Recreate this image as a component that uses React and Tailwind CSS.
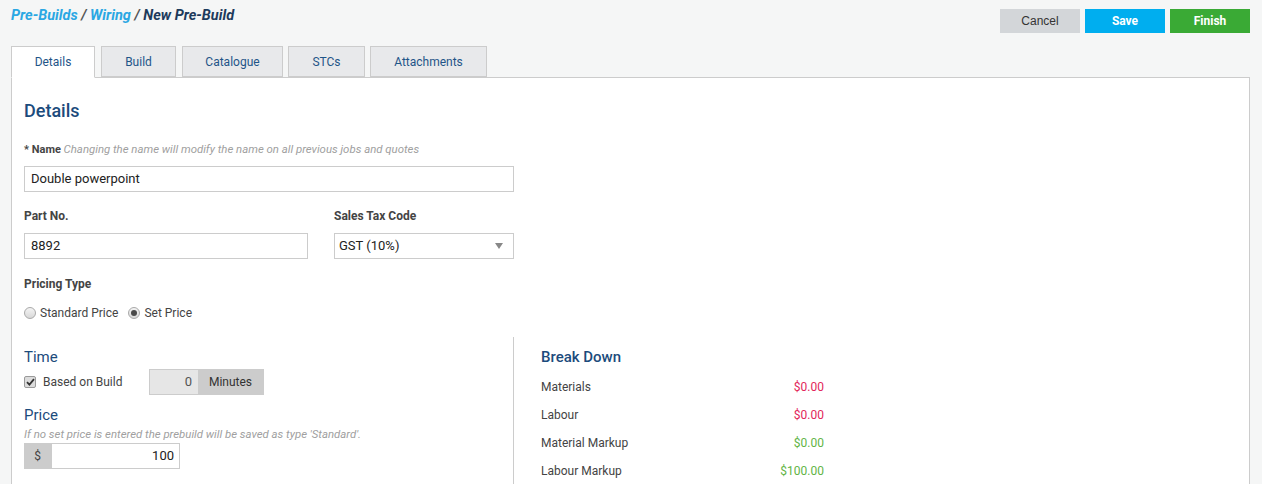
import React from "react";

const tabs = [
  { label: "Details", cls: "w-[84px]", active: true },
  { label: "Build", cls: "w-[75px] ml-[6px]" },
  { label: "Catalogue", cls: "w-[101px] ml-[6px]" },
  { label: "STCs", cls: "w-[77px] ml-[5px]" },
  { label: "Attachments", cls: "w-[117px] ml-[5px]" },
];

const breakdown = [
  { label: "Materials", value: "$0.00", color: "text-[#e2265a]" },
  { label: "Labour", value: "$0.00", color: "text-[#e2265a]" },
  { label: "Material Markup", value: "$0.00", color: "text-[#62b446]" },
  { label: "Labour Markup", value: "$100.00", color: "text-[#62b446]" },
];

function Radio({ checked, label }) {
  return (
    <label className="flex items-center gap-[4px]">
      <span className="w-[12px] h-[12px] rounded-full border border-[#a9a9a9] bg-gradient-to-b from-[#f4f4f4] to-[#d8d8d8] flex items-center justify-center">
        {checked && <span className="w-[6px] h-[6px] rounded-full bg-[#4a4a4a]" />}
      </span>
      <span>{label}</span>
    </label>
  );
}

export default function App() {
  return (
    <div className="w-[1262px] h-[484px] overflow-hidden bg-[#f5f6f6] font-['Roboto',sans-serif] text-[12px] text-[#333]">

      {/* HEADER */}
      <div className="flex justify-between items-start pl-[11px] pr-[12px] pt-[9px]">
        <div className="mt-[-2px] text-[14.5px] italic font-bold leading-[18px]">
          <span className="text-[#2aa7e3]">Pre-Builds</span>
          <span className="text-[#555]"> / </span>
          <span className="text-[#2aa7e3]">Wiring</span>
          <span className="text-[#555]"> / </span>
          <span className="text-[#1d3a5c]">New Pre-Build</span>
        </div>
        <div className="flex gap-[5px]">
          <button className="w-[80px] h-[24px] bg-[#d3d6d9] text-[#333] font-['Liberation_Sans',sans-serif]">Cancel</button>
          <button className="w-[80px] h-[24px] bg-[#00aeef] text-white font-bold">Save</button>
          <button className="w-[80px] h-[24px] bg-[#3aaa35] text-white font-bold">Finish</button>
        </div>
      </div>

      {/* TABS */}
      <div className="flex pl-[11px] mt-[13px] relative z-10">
        {tabs.map((t) => (
          <div
            key={t.label}
            className={
              t.active
                ? `${t.cls} h-[32px] -mb-px border border-[#cccccc] border-b-white bg-white text-[#1f5588] flex items-center justify-center`
                : `${t.cls} h-[31px] border border-[#cccccc] bg-[#e8e9eb] text-[#1f5588] flex items-center justify-center`
            }
          >
            {t.label}
          </div>
        ))}
      </div>

      {/* PANEL */}
      <div className="ml-[11px] mr-[12px] border border-[#cccccc] bg-white h-[420px]">
        <div className="pl-[12px] pt-[21px]">
          <h2 className="text-[18px] leading-[24px] font-medium text-[#1c4b7c]">Details</h2>

          <div className="mt-[18px] text-[11px] leading-[16px]">
            <span className="font-bold text-[#444]">* Name</span>{" "}
            <span className="italic text-[11.4px] text-[#a0a0a0]">Changing the name will modify the name on all previous jobs and quotes</span>
          </div>
          <div className="mt-[8px] w-[490px] h-[26px] border border-[#cccccc] flex items-center px-[6px] text-[13px] text-[#222]">
            Double powerpoint
          </div>

          <div className="flex gap-[26px] mt-[16px]">
            <div>
              <div className="text-[12px] leading-[16px] font-bold text-[#444]">Part No.</div>
              <div className="mt-[9px] w-[284px] h-[26px] border border-[#cccccc] flex items-center px-[6px] text-[13px] text-[#222]">
                8892
              </div>
            </div>
            <div>
              <div className="text-[12px] leading-[16px] font-bold text-[#444]">Sales Tax Code</div>
              <div className="mt-[9px] w-[180px] h-[26px] border border-[#cccccc] flex items-center justify-between pl-[4px] pr-[10px] text-[13px] text-[#222]">
                <span>GST (10%)</span>
                <svg width="8" height="6" viewBox="0 0 8 6">
                  <path d="M0 0 L8 0 L4 6 Z" fill="#888" />
                </svg>
              </div>
            </div>
          </div>

          <div className="mt-[17px] text-[12px] leading-[16px] font-bold text-[#444]">Pricing Type</div>
          <div className="mt-[13px] flex gap-[10px] text-[12px] leading-[16px] text-[#444]">
            <Radio label="Standard Price" />
            <Radio label="Set Price" checked />
          </div>
        </div>

        {/* LOWER COLUMNS */}
        <div className="flex mt-[16px]">
          <div className="w-[502px] border-r border-[#cccccc] pl-[12px] pt-[10px] h-[150px]">
            <h3 className="text-[15px] leading-[20px] text-[#1c4b7c]">Time</h3>
            <div className="mt-[2px] flex items-center">
              <div className="flex items-center gap-[7px] w-[125px] text-[12px] text-[#444]">
                <span className="w-[12px] h-[12px] border border-[#9a9a9a] bg-[#dcdcdc] rounded-[2px] flex items-center justify-center">
                  <svg width="9" height="8" viewBox="0 0 9 8">
                    <path d="M1 4.2 L3.4 6.6 L8 1.2" stroke="#333" strokeWidth="1.8" fill="none" />
                  </svg>
                </span>
                <span>Based on Build</span>
              </div>
              <div className="flex h-[26px] border border-[#cccccc]">
                <div className="w-[48px] bg-[#e6e6e6] flex items-center justify-end pr-[6px] text-[13px] text-[#555]">0</div>
                <div className="w-[65px] bg-[#cccccc] flex items-center justify-center text-[12px] text-[#333]">Minutes</div>
              </div>
            </div>

            <h3 className="mt-[10px] text-[15px] leading-[20px] text-[#1c4b7c]">Price</h3>
            <div className="mt-[2px] text-[11.4px] leading-[14px] italic text-[#a0a0a0]">
              If no set price is entered the prebuild will be saved as type 'Standard'.
            </div>
            <div className="mt-[2px] flex w-[156px] h-[26px]">
              <div className="w-[27px] bg-[#cccccc] flex items-center justify-center text-[12px] text-[#444]">$</div>
              <div className="flex-1 border border-[#cccccc] flex items-center justify-end pr-[5px] text-[13px] text-[#222]">100</div>
            </div>
          </div>

          <div className="pl-[27px] pt-[10px] w-[310px]">
            <h3 className="text-[15px] leading-[20px] font-medium text-[#1c4b7c]">Break Down</h3>
            <div className="mt-[6px]">
              {breakdown.map((r) => (
                <div key={r.label} className="h-[28px] flex items-center justify-between text-[12px] text-[#444]">
                  <span>{r.label}</span>
                  <span className={r.color}>{r.value}</span>
                </div>
              ))}
            </div>
          </div>
        </div>
      </div>

    </div>
  );
}
